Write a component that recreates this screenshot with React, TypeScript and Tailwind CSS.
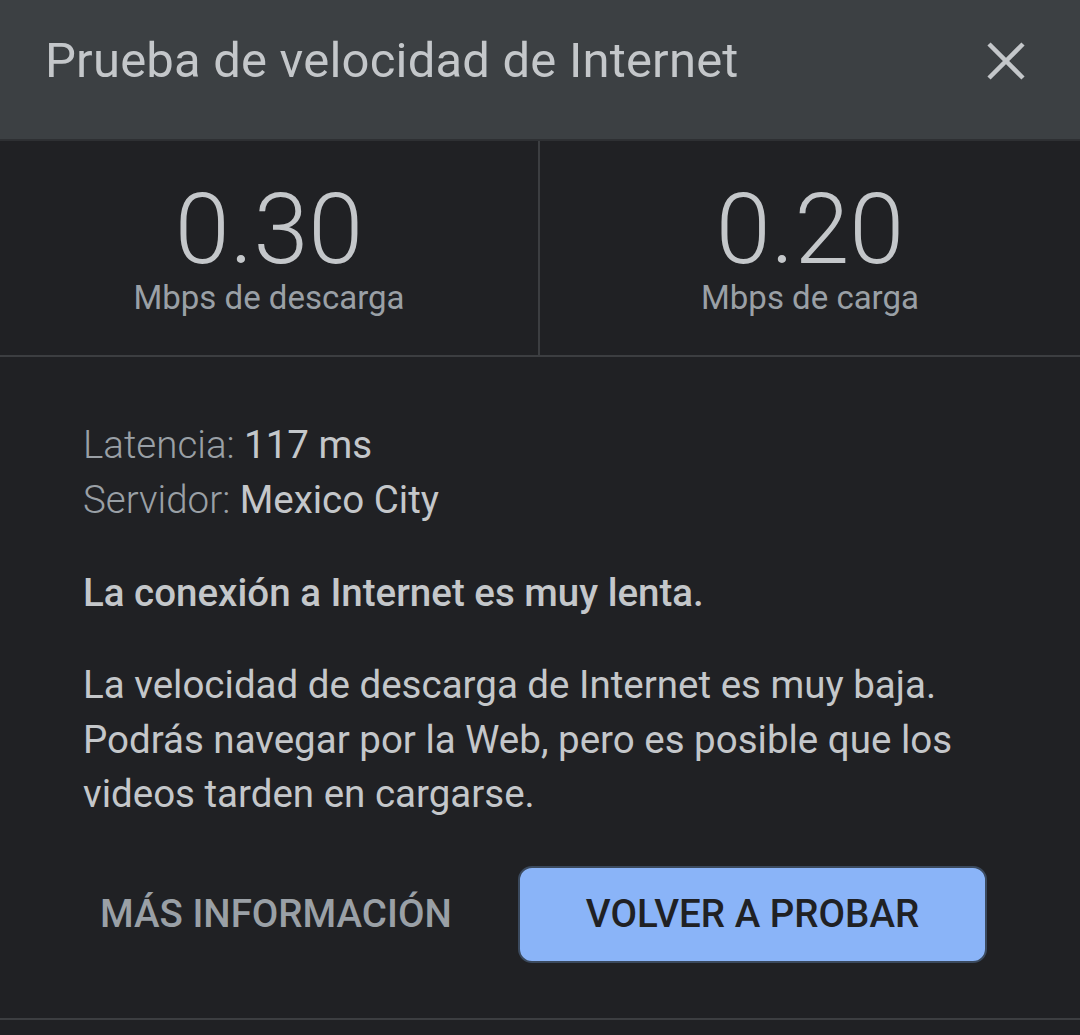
const font = { fontFamily: "Roboto, 'Noto Sans', sans-serif" };

export default function App() {
  return (
    <div className="w-[1080px] h-[1035px] bg-[#202124] overflow-hidden" style={font}>
      {/* Header */}
      <div className="h-[141px] bg-[#3c4043] border-b-2 border-[#2e3033] flex items-center justify-between pl-[45px] pr-[55px] pb-[18px]">
        <h1 className="text-[49px] text-[#c4c7ca] leading-none tracking-[0.2px]">
          Prueba de velocidad de Internet
        </h1>
        <svg width="38" height="38" viewBox="0 0 38 38" className="text-[#c4c7ca]">
          <path d="M2 2 L36 36 M36 2 L2 36" stroke="currentColor" strokeWidth="4.5" />
        </svg>
      </div>

      {/* Stats */}
      <div className="grid grid-cols-2 h-[216px] border-b-2 border-[#3c3e41]">
        <div className="flex flex-col items-center justify-center border-r-2 border-[#3c3e41] pb-[2px]">
          <div className="text-[99px] font-light leading-none text-[#c4c7ca]">0.30</div>
          <div className="text-[33px] leading-none mt-[2px] text-[#9aa0a6]">Mbps de descarga</div>
        </div>
        <div className="flex flex-col items-center justify-center pb-[2px]">
          <div className="text-[99px] font-light leading-none text-[#c4c7ca]">0.20</div>
          <div className="text-[33px] leading-none mt-[2px] text-[#9aa0a6]">Mbps de carga</div>
        </div>
      </div>

      {/* Details */}
      <div className="px-[83px] pt-[60px]">
        <div className="text-[38.5px] leading-[55px] text-[#9aa0a6]">
          <div>
            <span className="font-light">Latencia: </span>
            <span className="text-[#c4c7ca]">117 ms</span>
          </div>
          <div>
            <span className="font-light">Servidor: </span>
            <span className="text-[#c4c7ca]">Mexico City</span>
          </div>
        </div>

        <p className="mt-[38px] text-[38.5px] leading-[55px] font-medium text-[#c4c7ca]">
          La conexión a Internet es muy lenta.
        </p>

        <p className="mt-[38px] text-[38.5px] leading-[54.5px] text-[#c4c7ca]">
          La velocidad de descarga de Internet es muy baja. Podrás navegar por la Web, pero es posible que los videos tarden en cargarse.
        </p>

        <div className="mt-[44px] flex items-center">
          <button className="w-[435px] text-left pl-[17px] text-[38.5px] font-medium text-[#9aa0a6]">
            MÁS INFORMACIÓN
          </button>
          <button className="w-[469px] h-[97px] rounded-[14px] bg-[#8ab4f8] border-2 border-[#3b4a5e] text-[38.5px] font-medium text-[#202124]">
            VOLVER A PROBAR
          </button>
        </div>
      </div>

      <div className="mt-[55px] border-t-2 border-[#3c3e41]" />
    </div>
  );
}
